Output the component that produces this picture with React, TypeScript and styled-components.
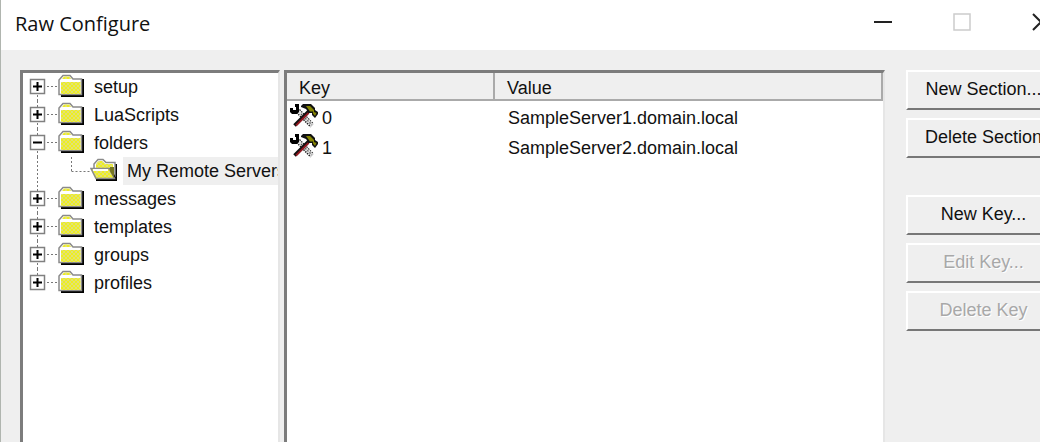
import React from "react";
import styled, { createGlobalStyle } from "styled-components";

const Global = createGlobalStyle`
  * { box-sizing: border-box; }
  html, body, #root { height: 100%; }
  body {
    margin: 0;
    overflow: hidden;
    background: #efefef;
    color: #111;
    font: 18px/28px "Liberation Sans", Arial, sans-serif;
  }
`;

const Window = styled.main`
  display: flex;
  flex-direction: column;
  height: 100%;
  border-left: 1px solid #b0b5af;
  overflow: hidden;
`;

const TitleBar = styled.header`
  display: flex;
  align-items: center;
  flex: none;
  height: 50px;
  padding-left: 14px;
  background: #fff;
`;

const Title = styled.h1`
  flex: 1;
  margin: 0;
  padding-bottom: 2px;
  font: 400 20px/28px "Open Sans", "Noto Sans", sans-serif;
`;

const Controls = styled.div`
  display: flex;
  flex: none;
  align-self: flex-start;
  height: 44px;
  margin-right: -40px;
`;

const WindowButton = styled.button`
  display: grid;
  place-items: center;
  width: 79px;
  padding: 0;
  border: 0;
  background: none;
  color: #222;
  &:disabled { color: #ccc; }
`;

const Body = styled.div`
  display: flex;
  flex: 1;
  min-height: 0;
  padding: 20px 0 0 19px;
`;

const Pane = styled.section`
  border: solid;
  border-width: 3px 2px 0 3px;
  border-color: #7c7c7c #e6e6e6 #fff #7c7c7c;
  background: #fff;
  overflow: hidden;
`;

const TreePane = styled(Pane)`
  flex: none;
  width: 260px;
`;

const ListPane = styled(Pane)`
  flex: 1;
  min-width: 0;
  margin-left: 4px;
`;

const TreeList = styled.ul`
  margin: 0;
  padding: 0;
  list-style: none;
`;

const TreeRow = styled.li`
  display: flex;
  align-items: center;
  height: 28px;
  padding-left: 6px;
  white-space: nowrap;
`;

const NodeLabel = styled.span<{ $selected?: boolean }>`
  padding: 0 4px;
  margin-left: 5px;
  background: ${(p) => (p.$selected ? "#efefef" : "transparent")};
`;

const Toggle = styled.button`
  width: 28px;
  height: 28px;
  padding: 0;
  border: 0;
  background: none;
`;

const Icon = styled.svg`
  display: block;
  flex: none;
`;

const Table = styled.table`
  width: 100%;
  border-collapse: separate;
  border-spacing: 0;
  table-layout: fixed;
`;

const HeadCell = styled.th`
  height: 28px;
  padding: 4px 12px 0 12px;
  border-right: 2px solid #aaa;
  border-bottom: 2px solid #aaa;
  background: #efefef;
  font-weight: 400;
  line-height: 22px;
  text-align: left;
  &:first-child { width: 208px; }
`;

const Cell = styled.td`
  height: 30px;
  padding: 0 0 0 13px;
  &:first-child { padding-left: 3px; }
`;

const CellContent = styled.div`
  display: flex;
  gap: 4px;
  height: 30px;
`;

const CellText = styled.span`
  padding-top: 4px;
  line-height: 26px;
`;

const Actions = styled.nav`
  display: flex;
  flex: none;
  flex-direction: column;
  width: 155px;
  padding-left: 21px;
`;

const Group = styled.div`
  display: flex;
  flex-direction: column;
  gap: 8px;
  margin-bottom: 37px;
`;

const Action = styled.button`
  width: 155px;
  height: 40px;
  padding: 0 0 2px;
  border: solid;
  border-width: 2px;
  border-color: #fff #777 #777 #fff;
  background: #efefef;
  color: #111;
  font: inherit;
  line-height: 28px;
  white-space: nowrap;
  &:disabled {
    color: #a8a8a8;
    text-shadow: 1px 1px 0 #fff;
  }
`;

function Branch({ open, first, last }: { open?: boolean; first?: boolean; last?: boolean }) {
  return (
    <Icon width="28" height="28" viewBox="0 0 28 28" fill="none">
      <g stroke="#777" strokeDasharray="2 2">
        {!first && <path d="M8.500 0V6" />}
        {!last && <path d="M8.500 22V28" />}
        <path d="M18 13.500H28" />
      </g>
      <rect x="1.500" y="6.500" width="14" height="14" stroke="#808080" strokeWidth="1.500" />
      <path d={open ? "M4 13.500H13" : "M4 13.500H13M8.500 9V18"} stroke="#000" strokeWidth="2" />
    </Icon>
  );
}

function ChildBranch() {
  return (
    <Icon width="61" height="28" viewBox="0 0 61 28" fill="none" stroke="#777" strokeDasharray="2 2">
      <path d="M8.500 0V28M42.500 0V14M42.500 14.500H61" />
    </Icon>
  );
}

const Weave = () => (
  <defs>
    <pattern id="weave" width="4" height="4" patternUnits="userSpaceOnUse">
      <path d="M0 0H4V4H0Z" fill="#eeee22" />
      <path d="M0 0H2V2H0ZM2 2H4V4H2Z" fill="#e2e274" />
    </pattern>
  </defs>
);

function Folder() {
  return (
    <Icon width="28" height="28" viewBox="0 0 28 28">
      <Weave />
      <path d="M24 6H27V24H4V21H24Z" fill="#000" />
      <path d="M2 21V7L6 2.500H13L16 6H24.500V21.500H2Z" fill="#fff" stroke="#8a8a8a" strokeWidth="1.500" />
      <path d="M5 6L7 3.500H12.500L14.500 6Z" fill="url(#weave)" />
      <path d="M4 9H23.500V21H4Z" fill="url(#weave)" />
    </Icon>
  );
}

function OpenFolder() {
  return (
    <Icon width="28" height="28" viewBox="0 0 28 28">
      <Weave />
      <path d="M24 7H27V24H6V21H24Z" fill="#000" />
      <path d="M4 12V7L8 2.500H13L16 5.500H25V20H6Z" fill="#fff" stroke="#8a8a8a" strokeWidth="1.500" />
      <path d="M6 7L8.500 4H12.500L15.500 7H23V12H6Z" fill="url(#weave)" />
      <path d="M19 11H21L26 21V22H23Z" fill="#000" />
      <path d="M1 11.500H19L24.500 21.500H6Z" fill="url(#weave)" stroke="#8a8a8a" strokeWidth="1.500" />
      <path d="M3 13H18" stroke="#fff" strokeWidth="2" />
      <path d="M20 10V14L24 21V10Z" fill="#777722" />
    </Icon>
  );
}

function Tools() {
  return (
    <Icon width="28" height="30" viewBox="0 -2 28 30">
      <path d="M8 8L22 22.500" stroke="#222" strokeWidth="5.500" strokeDasharray="1.500 1" />
      <path d="M8 8L22.500 22.500" stroke="#ddd" strokeWidth="3" />
      <path d="M11 11L22 22" stroke="#555" strokeWidth="1.200" strokeDasharray="1.500 1.500" />
      <path d="M5 1H9V9L7 11H2L0 9V5H3V7H6V4H5Z" fill="#000" />
      <path d="M4.500 22.500L19 8" stroke="#111" strokeWidth="3.500" />
      <path d="M6 22.500L18.500 10" stroke="#941820" strokeWidth="1.800" />
      <path d="M11 3L13 1H21L25 5V7L28 9V11L25 15L22 12V10H19L16 6L11 4Z" fill="#111" />
      <path d="M16 3H20L24 7V9L26.500 10L25 13L23 10.500V8.500H20Z" fill="#858500" />
    </Icon>
  );
}

const sections = [
  { name: "setup" },
  { name: "LuaScripts" },
  { name: "folders", child: "My Remote Servers" },
  { name: "messages" },
  { name: "templates" },
  { name: "groups" },
  { name: "profiles" },
];

const entries = [
  ["0", "SampleServer1.domain.local"],
  ["1", "SampleServer2.domain.local"],
];

export default function App() {
  return (
    <>
      <Global />
      <Window>
        <TitleBar>
          <Title>Raw Configure</Title>
          <Controls>
            <WindowButton aria-label="Minimize">
              <Icon width="18" height="18"><path d="M0 9H18" stroke="currentColor" strokeWidth="2" /></Icon>
            </WindowButton>
            <WindowButton aria-label="Maximize" disabled>
              <Icon width="18" height="18"><path d="M1 1H17V17H1Z" fill="none" stroke="currentColor" strokeWidth="1.500" /></Icon>
            </WindowButton>
            <WindowButton aria-label="Close">
              <Icon width="18" height="18"><path d="M1 1L17 17M17 1L1 17" stroke="currentColor" strokeWidth="2" /></Icon>
            </WindowButton>
          </Controls>
        </TitleBar>
        <Body>
          <TreePane aria-label="Sections">
            <TreeList>
              {sections.map(({ name, child }, i) => (
                <React.Fragment key={name}>
                  <TreeRow>
                    <Toggle aria-label={`${child ? "Collapse" : "Expand"} ${name}`} aria-expanded={!!child}>
                      <Branch open={!!child} first={i === 0} last={i === sections.length - 1} />
                    </Toggle>
                    <Folder />
                    <NodeLabel>{name}</NodeLabel>
                  </TreeRow>
                  {child && (
                    <TreeRow>
                      <ChildBranch />
                      <OpenFolder />
                      <NodeLabel $selected>{child}</NodeLabel>
                    </TreeRow>
                  )}
                </React.Fragment>
              ))}
            </TreeList>
          </TreePane>
          <ListPane aria-label="Keys">
            <Table>
              <thead>
                <tr><HeadCell>Key</HeadCell><HeadCell>Value</HeadCell></tr>
              </thead>
              <tbody>
                {entries.map(([key, value]) => (
                  <tr key={key}>
                    <Cell><CellContent><Tools /><CellText>{key}</CellText></CellContent></Cell>
                    <Cell><CellContent><CellText>{value}</CellText></CellContent></Cell>
                  </tr>
                ))}
              </tbody>
            </Table>
          </ListPane>
          <Actions aria-label="Actions">
            <Group>
              <Action>New Section...</Action>
              <Action>Delete Section</Action>
            </Group>
            <Group>
              <Action>New Key...</Action>
              <Action disabled>Edit Key...</Action>
              <Action disabled>Delete Key</Action>
            </Group>
          </Actions>
        </Body>
      </Window>
    </>
  );
}
